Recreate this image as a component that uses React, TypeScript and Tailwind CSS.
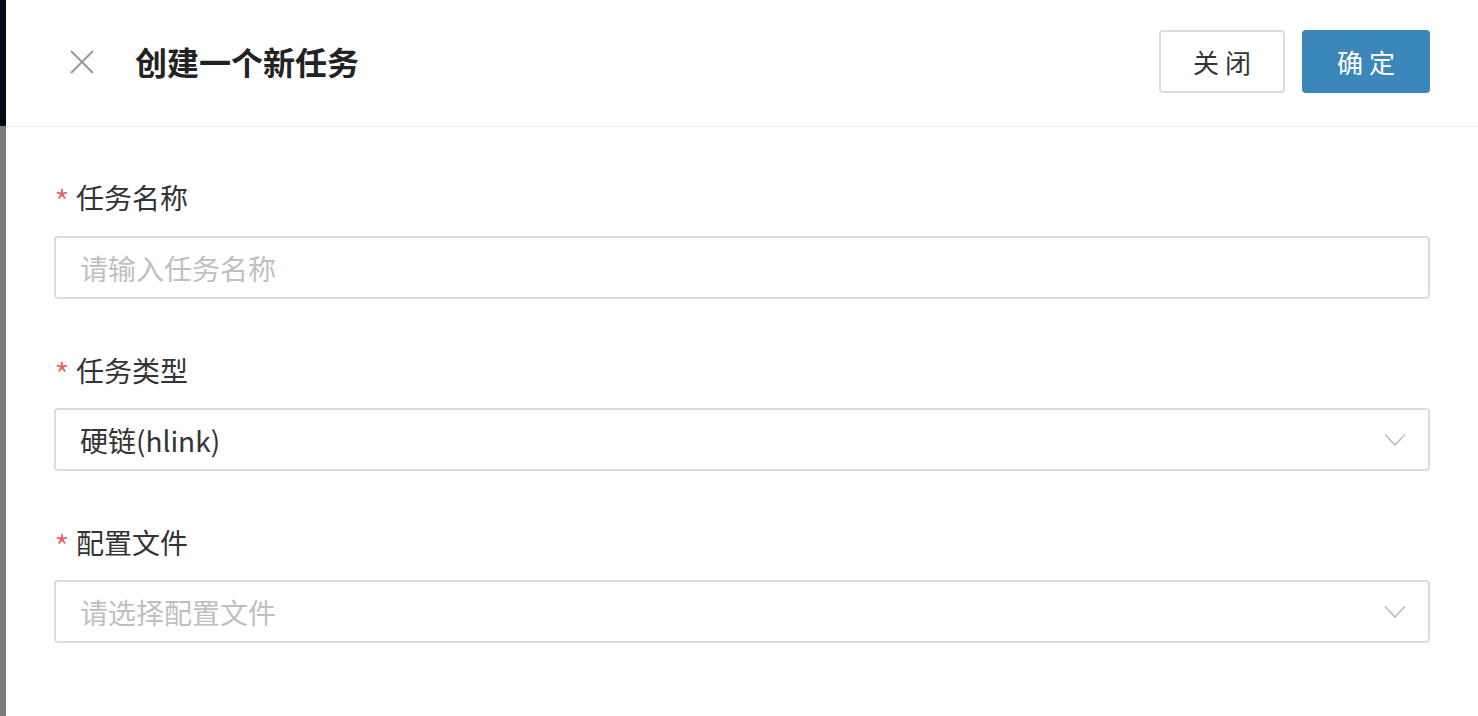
import React from 'react';

const Label = ({ text }: { text: string }) => (
  <div className="flex items-center h-[36px] text-[28px] text-[#333]">
    <span className="text-[#f25a5a] text-[36px] font-light mr-[6px] leading-none mt-[8px]">*</span>
    <span>{text}</span>
  </div>
);

const Chevron = () => (
  <svg width="22" height="14" viewBox="0 0 22 14" fill="none">
    <path d="M1 1.5 L11 12 L21 1.5" stroke="#bdbdbd" strokeWidth="1.6" />
  </svg>
);

const App = () => {
  return (
    <div
      className="flex w-full h-[716px] bg-white overflow-hidden"
      style={{ fontFamily: '"Noto Sans CJK SC", "Noto Sans", sans-serif' }}
    >
      {/* left edge of page behind the drawer */}
      <div className="w-[6px] flex flex-col shrink-0">
        <div className="h-[126px] bg-[#020b15]" />
        <div className="flex-1 bg-[#7b7b7b]" />
      </div>

      <div className="flex-1 flex flex-col">
        {/* Header */}
        <div className="h-[127px] border-b border-[#ececec] flex items-center pl-[64px] pr-[48px]">
          <svg width="24" height="24" viewBox="0 0 24 24" className="shrink-0 mb-[2px]">
            <path d="M1 1 L23 23 M23 1 L1 23" stroke="#9a9a9a" strokeWidth="2" />
          </svg>
          <h1 className="ml-[41px] mb-[4px] text-[32px] font-semibold text-[#222]">创建一个新任务</h1>
          <div className="ml-auto mb-[3px] flex items-center gap-[17px]">
            <button className="w-[126px] h-[63px] border-2 border-[#dcdcdc] rounded-[4px] bg-white text-[26px] text-[#333] tracking-[6px] pl-[6px]">
              关闭
            </button>
            <button className="w-[128px] h-[63px] rounded-[4px] bg-[#3c87b9] text-[26px] text-white tracking-[6px] pl-[6px]">
              确定
            </button>
          </div>
        </div>

        {/* Form */}
        <div className="px-[48px] pt-[52px] flex flex-col">
          <Label text="任务名称" />
          <div className="mt-[21px] h-[63px] border-2 border-[#dcdcdc] rounded-[4px] flex items-center px-[24px] text-[28px] text-[#bfbfbf]">
            请输入任务名称
          </div>

          <div className="mt-[53px]">
            <Label text="任务类型" />
          </div>
          <div className="mt-[20px] h-[63px] border-2 border-[#dcdcdc] rounded-[4px] flex items-center justify-between pl-[24px] pr-[22px] text-[28px] text-[#333]">
            <span>硬链(hlink)</span>
            <Chevron />
          </div>

          <div className="mt-[53px]">
            <Label text="配置文件" />
          </div>
          <div className="mt-[20px] h-[63px] border-2 border-[#dcdcdc] rounded-[4px] flex items-center justify-between pl-[24px] pr-[22px] text-[28px] text-[#bfbfbf]">
            <span>请选择配置文件</span>
            <Chevron />
          </div>
        </div>
      </div>
    </div>
  );
};

export default App;
